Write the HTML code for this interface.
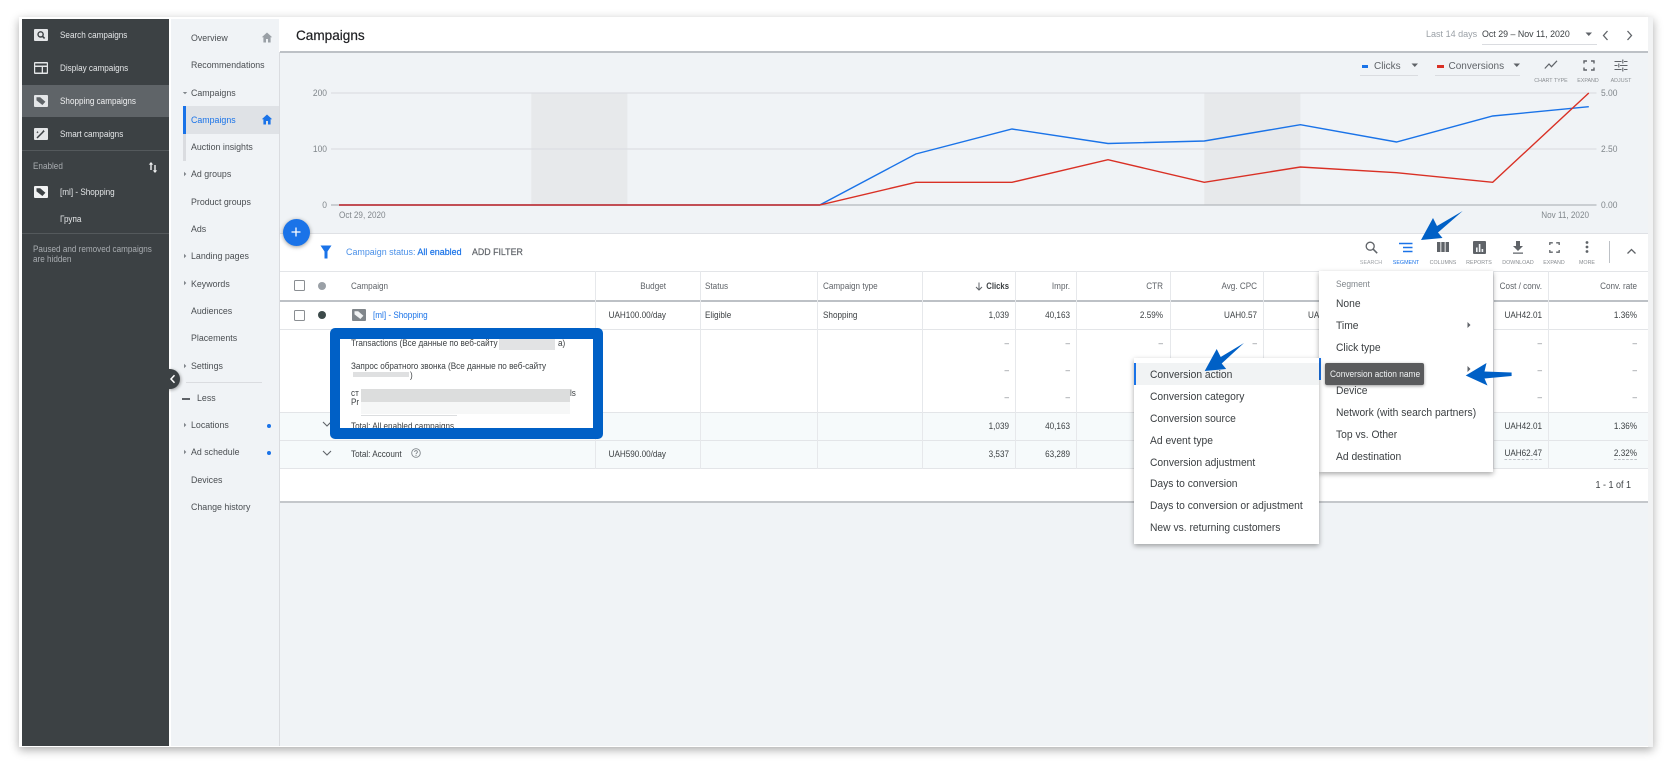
<!DOCTYPE html>
<html><head><meta charset="utf-8"><title>Campaigns</title>
<style>
html,body{margin:0;padding:0;background:#fff}
#p{position:relative;width:1680px;height:773px;overflow:hidden;background:#fff;font-family:"Liberation Sans","Noto Sans CJK SC",sans-serif;color:#3c4043;filter:blur(.3px)}
#p div,#p svg{position:absolute}
.t,.r,.c{position:absolute;white-space:nowrap;font-size:9.2px;line-height:12px}
.t{transform:translateY(-50%) scaleX(var(--s,.885));transform-origin:left center}
.r{transform:translate(-100%,-50%) scaleX(var(--s,.885));transform-origin:right center}
.c{transform:translate(-50%,-50%) scaleX(var(--s,.885));transform-origin:center center}
.w{color:#e4e6e8}
.g{color:#a9adb1}
.n{font-size:9.6px;--s:.92;left:191px;color:#4a4e52}
.m{font-size:11.2px;--s:.92;color:#3c4043}
.x{font-size:5.8px;--s:.92;color:#8a8e92}
.a{color:#5f6368}
.d{color:#80868b}
.v{background:#e6e8eb;width:1px;top:271px;height:198px}
</style></head><body><div id="p">

<!-- frame -->
<div style="left:19px;top:17px;width:1634px;height:730px;background:#fff;box-shadow:0 3px 9px rgba(0,0,0,.33)"></div>
<div style="left:1648px;top:17px;width:5px;height:730px;background:#f2f3f4"></div>

<!-- sidebar -->
<div style="left:22px;top:19px;width:147px;height:727px;background:#3c4144"></div>
<div style="left:22px;top:85px;width:147px;height:32px;background:#5f6468"></div>
<div style="left:22px;top:150px;width:147px;height:1px;background:#54595c"></div>
<div style="left:22px;top:233px;width:147px;height:1px;background:#54595c"></div>

<svg style="left:34px;top:29px" width="14" height="12" viewBox="0 0 14 12"><rect width="14" height="12" rx="1" fill="#e4e6e8"/><circle cx="6.6" cy="5.4" r="2.6" fill="none" stroke="#3c4144" stroke-width="1.4"/><path d="M8.5 7.3L10.6 9.4" stroke="#3c4144" stroke-width="1.6"/></svg>
<svg style="left:34px;top:62px" width="14" height="12" viewBox="0 0 14 12"><rect width="14" height="12" rx="1" fill="#e4e6e8"/><rect x="1.2" y="1.5" width="11.6" height="2" fill="#3c4144"/><rect x="1.2" y="5" width="6.5" height="5.5" fill="#3c4144"/><rect x="9" y="5" width="3.8" height="5.5" fill="#3c4144"/></svg>
<svg style="left:34px;top:95px" width="14" height="12" viewBox="0 0 14 12"><rect width="14" height="12" rx="1" fill="#e4e6e8"/><path d="M2.5 2.2h3.7l5.2 4.6-3 3.2-5.9-4.6z" fill="#5f6468"/></svg>
<svg style="left:34px;top:128px" width="14" height="12" viewBox="0 0 14 12"><rect width="14" height="12" rx="1" fill="#e4e6e8"/><path d="M3 10l6-6" stroke="#3c4144" stroke-width="1.5"/><path d="M9.5 1.8l.5 1 1 .5-1 .5-.5 1-.5-1-1-.5 1-.5zM3.5 3l.4.8.8.4-.8.4-.4.8-.4-.8-.8-.4.8-.4z" fill="#3c4144"/></svg>
<svg style="left:34px;top:186px" width="14" height="12" viewBox="0 0 14 12"><rect width="14" height="12" rx="1" fill="#f1f2f3"/><path d="M2.5 2.2h3.7l5.2 4.6-3 3.2-5.9-4.6z" fill="#3c4144"/></svg>
<svg style="left:148px;top:161px" width="10" height="13" viewBox="0 0 10 13"><path d="M3 1L.8 3.6h1.5V9h1.4V3.6h1.5zM7 12l2.2-2.6H7.7V4H6.3v5.4H4.800z" fill="#f0f1f2"/></svg>

<span class="t w" style="left:60px;top:35px">Search campaigns</span>
<span class="t w" style="left:60px;top:68px">Display campaigns</span>
<span class="t" style="left:60px;top:101px;color:#f0f1f2">Shopping campaigns</span>
<span class="t w" style="left:60px;top:134px">Smart campaigns</span>
<span class="t g" style="left:32.500px;top:166px">Enabled</span>
<span class="t w" style="left:60px;top:192px">[ml] - Shopping</span>
<span class="t w" style="left:60px;top:219px">Група</span>
<span class="t g" style="left:32.500px;top:249px">Paused and removed campaigns</span>
<span class="t g" style="left:32.500px;top:259px">are hidden</span>

<!-- nav -->
<div style="left:171px;top:19px;width:108px;height:727px;background:#f0f3f6"></div>
<div style="left:279px;top:52px;width:1px;height:694px;background:#dadce0"></div>
<div style="left:183px;top:106px;width:96px;height:28px;background:#dfe2e6"></div>
<div style="left:183px;top:106px;width:3px;height:28px;background:#1a73e8"></div>
<div style="left:183px;top:134px;width:3px;height:27px;background:#dadce0"></div>
<div style="left:186px;top:382px;width:76px;height:1px;background:#dadce0"></div>

<span class="t n" style="top:39px">Overview</span>
<span class="t n" style="top:66px">Recommendations</span>
<span class="t n" style="top:93.500px">Campaigns</span>
<span class="t n" style="top:121px;color:#1a73e8">Campaigns</span>
<span class="t n" style="top:148px">Auction insights</span>
<span class="t n" style="top:175px">Ad groups</span>
<span class="t n" style="top:203px">Product groups</span>
<span class="t n" style="top:230px">Ads</span>
<span class="t n" style="top:257px">Landing pages</span>
<span class="t n" style="top:285px">Keywords</span>
<span class="t n" style="top:312px">Audiences</span>
<span class="t n" style="top:339px">Placements</span>
<span class="t n" style="top:367px">Settings</span>
<span class="t n" style="top:399px;left:197px">Less</span>
<span class="t n" style="top:426px">Locations</span>
<span class="t n" style="top:453px">Ad schedule</span>
<span class="t n" style="top:481px">Devices</span>
<span class="t n" style="top:508px">Change history</span>

<svg style="left:261px;top:32px" width="12" height="11" viewBox="0 0 12 11"><path d="M6 .5L.8 5.300h1.600V10.500h2.600V7h2v3.500h2.600V5.300h1.600z" fill="#9aa0a6"/></svg>
<svg style="left:261px;top:114px" width="12" height="11" viewBox="0 0 12 11"><path d="M6 .5L.8 5.300h1.600V10.500h2.600V7h2v3.500h2.600V5.300h1.600z" fill="#1a73e8"/></svg>
<svg style="left:182px;top:90px" width="6" height="6" viewBox="0 0 6 6"><path d="M.8 2h4.400L3 4.300z" fill="#80868b"/></svg>
<svg style="left:182px;top:171px" width="6" height="6" viewBox="0 0 6 6"><path d="M2 .8v4.400L4.300 3z" fill="#80868b"/></svg>
<svg style="left:182px;top:253px" width="6" height="6" viewBox="0 0 6 6"><path d="M2 .8v4.400L4.300 3z" fill="#80868b"/></svg>
<svg style="left:182px;top:280px" width="6" height="6" viewBox="0 0 6 6"><path d="M2 .8v4.400L4.300 3z" fill="#80868b"/></svg>
<svg style="left:182px;top:363px" width="6" height="6" viewBox="0 0 6 6"><path d="M2 .8v4.400L4.300 3z" fill="#80868b"/></svg>
<svg style="left:182px;top:422px" width="6" height="6" viewBox="0 0 6 6"><path d="M2 .8v4.400L4.300 3z" fill="#80868b"/></svg>
<svg style="left:182px;top:449px" width="6" height="6" viewBox="0 0 6 6"><path d="M2 .8v4.400L4.300 3z" fill="#80868b"/></svg>
<div style="left:182px;top:398px;width:8px;height:1.500px;background:#5f6368"></div>
<div style="left:267px;top:424px;width:4px;height:4px;border-radius:50%;background:#1a73e8"></div>
<div style="left:267px;top:451px;width:4px;height:4px;border-radius:50%;background:#1a73e8"></div>

<!-- collapse -->
<div style="left:160px;top:369px;width:20px;height:20px;border-radius:50%;background:#3c4144;box-shadow:1px 1px 3px rgba(0,0,0,.35);clip-path:inset(-4px -4px -4px 9px)"></div>
<svg style="left:169px;top:374px" width="8" height="10" viewBox="0 0 8 10"><path d="M5.500 1.200L2 5l3.500 3.800" fill="none" stroke="#fff" stroke-width="1.500"/></svg>

<!-- main bg -->
<div style="left:280px;top:52px;width:1368px;height:694px;background:#f0f3f6"></div>
<!-- header -->
<div style="left:280px;top:17px;width:1368px;height:35px;background:#fff"></div>
<div style="left:280px;top:51px;width:1368px;height:1.500px;background:#bdc1c6"></div>
<span class="t" style="left:296px;top:35px;font-size:14px;--s:.97;color:#202124;-webkit-text-stroke:.2px #202124">Campaigns</span>
<span class="t g" style="left:1426px;top:35px;font-size:9.500px;--s:.95;color:#9aa0a6">Last 14 days</span>
<span class="t" style="left:1481.800px;top:35px;font-size:9.500px;--s:.93;color:#3c4043">Oct 29 – Nov 11, 2020</span>
<div style="left:1481.800px;top:44px;width:115px;height:1px;background:#dadce0"></div>
<svg style="left:1585px;top:32px" width="8" height="5" viewBox="0 0 8 5"><path d="M.5.500h6.500L3.800 4z" fill="#5f6368"/></svg>
<svg style="left:1601.500px;top:30px" width="7" height="11" viewBox="0 0 7 11"><path d="M5.500 1L1.500 5.500l4 4.500" fill="none" stroke="#5f6368" stroke-width="1.300"/></svg>
<svg style="left:1625.500px;top:30px" width="7" height="11" viewBox="0 0 7 11"><path d="M1.500 1l4 4.500-4 4.500" fill="none" stroke="#5f6368" stroke-width="1.300"/></svg>

<!-- chart toolbar -->
<div style="left:1361.800px;top:65px;width:6.500px;height:2.500px;background:#1a73e8"></div>
<span class="t" style="left:1374px;top:67px;font-size:10px;--s:1;color:#5f6368">Clicks</span>
<svg style="left:1411px;top:63px" width="8" height="5" viewBox="0 0 8 5"><path d="M.5.500h6.500L3.800 4z" fill="#5f6368"/></svg>
<div style="left:1360.400px;top:75px;width:58px;height:1px;background:#dadce0"></div>
<div style="left:1437px;top:65px;width:6.500px;height:2.500px;background:#d93025"></div>
<span class="t" style="left:1448.500px;top:67px;font-size:10px;--s:1;color:#5f6368">Conversions</span>
<svg style="left:1513px;top:63px" width="8" height="5" viewBox="0 0 8 5"><path d="M.5.500h6.500L3.800 4z" fill="#5f6368"/></svg>
<div style="left:1435px;top:75px;width:85px;height:1px;background:#dadce0"></div>

<svg style="left:1543.500px;top:60px" width="14" height="10" viewBox="0 0 14 10"><path d="M.8 8.500L5 4l2.500 2.700L13 .8" fill="none" stroke="#5f6368" stroke-width="1.200"/></svg>
<svg style="left:1582.500px;top:60px" width="12" height="11" viewBox="0 0 12 11"><path d="M1 3.500V1h3M8 1h3v2.500M11 7.500V10H8M4 10H1V7.500" fill="none" stroke="#5f6368" stroke-width="1.400"/></svg>
<svg style="left:1613.700px;top:59px" width="14" height="13" viewBox="0 0 14 13"><path d="M.5 2.500h7M10 2.500h3.500M.5 6.500h3M6 6.500h7.500M.5 10.500h7M10 10.500h3.500M8.800.5v4M4.800 4.500v4M8.800 8.500v4" fill="none" stroke="#5f6368" stroke-width="1.100"/></svg>
<span class="c x" style="left:1550.500px;top:80.500px">CHART TYPE</span>
<span class="c x" style="left:1588.400px;top:80.500px">EXPAND</span>
<span class="c x" style="left:1620.700px;top:80.500px">ADJUST</span>

<!-- chart -->
<svg style="left:0;top:0" width="1680" height="240" viewBox="0 0 1680 240">
<rect x="531.300" y="93" width="96.100" height="112" fill="#e7e9eb"/>
<rect x="1204.300" y="93" width="96.100" height="112" fill="#e7e9eb"/>
<path d="M331 93H1596.500M331 149H1596.500" stroke="#dcdfe3" stroke-width="1.200"/>
<path d="M331 205H1596.500" stroke="#b4b8bc" stroke-width="1.200"/>
<polyline fill="none" stroke="#1a73e8" stroke-width="1.400" points="339,205 819.700,205 915.800,154 1012,129 1108,143.500 1204.300,141 1300.400,124.700 1396.500,142 1492.700,116 1588.800,106.700"/>
<polyline fill="none" stroke="#d93025" stroke-width="1.400" points="339,205 819.700,205 915.800,182.300 1012,182.300 1108,159.700 1204.300,182.300 1300.400,167 1396.500,172.700 1492.700,182.300 1588.800,93"/>
</svg>
<span class="r a" style="left:327px;top:93px;--s:.92;color:#80868b">200</span>
<span class="r a" style="left:327px;top:149px;--s:.92;color:#80868b">100</span>
<span class="r a" style="left:327px;top:205px;--s:.92;color:#80868b">0</span>
<span class="t a" style="left:1601px;top:93px;--s:.92;color:#80868b">5.00</span>
<span class="t a" style="left:1601px;top:149px;--s:.92;color:#80868b">2.50</span>
<span class="t a" style="left:1601px;top:205px;--s:.92;color:#80868b">0.00</span>
<span class="t" style="left:339px;top:215px;color:#80868b">Oct 29, 2020</span>
<span class="r" style="left:1588.800px;top:215px;color:#80868b">Nov 11, 2020</span>

<!-- white table card -->
<div style="left:280px;top:233px;width:1368px;height:269px;background:#fff"></div>
<div style="left:280px;top:232.500px;width:1368px;height:1px;background:#dfe1e5"></div>
<div style="left:280px;top:501px;width:1368px;height:1.500px;background:#c4c7cb"></div>

<!-- filter row -->
<svg style="left:320px;top:245px" width="12" height="14" viewBox="0 0 12 14"><path d="M.5.500h11L7.500 6.500V13.500h-3V6.500z" fill="#1a73e8"/></svg>
<span class="t" style="left:345.700px;top:253px;font-size:9.600px;--s:.93;color:#4a90e8">Campaign status: <b style="color:#1a73e8;font-weight:normal;-webkit-text-stroke:.2px #1a73e8">All enabled</b></span>
<span class="t" style="left:472px;top:253px;font-size:9.600px;--s:.92;color:#5f6368;-webkit-text-stroke:.2px #5f6368">ADD FILTER</span>

<!-- toolbar icons -->
<svg style="left:1364.800px;top:241px" width="13" height="13" viewBox="0 0 13 13"><circle cx="5.200" cy="5.200" r="4" fill="none" stroke="#5f6368" stroke-width="1.300"/><path d="M8.200 8.200l4 4" stroke="#5f6368" stroke-width="1.500"/></svg>
<svg style="left:1399px;top:242px" width="14" height="11" viewBox="0 0 14 11"><path d="M0 1.500h13.500M4 5.500h9.500M4 9.500h9.500" stroke="#1a73e8" stroke-width="1.500"/></svg>
<svg style="left:1437px;top:242px" width="12" height="10" viewBox="0 0 12 10"><path d="M0 0h3.400v10H0zM4.300 0h3.400v10H4.300zM8.600 0H12v10H8.600z" fill="#5f6368"/></svg>
<svg style="left:1472.500px;top:241px" width="13" height="13" viewBox="0 0 13 13"><rect width="13" height="13" rx="1" fill="#5f6368"/><path d="M3 6.500h1.600V11H3zM5.800 3h1.600v8H5.800zM8.600 8h1.600v3H8.600z" fill="#f0f3f6"/></svg>
<svg style="left:1512.600px;top:241px" width="10" height="13" viewBox="0 0 10 13"><path d="M3 0h4v5h3L5 10 0 5h3zM0 11.500h10v1.300H0z" fill="#5f6368"/></svg>
<svg style="left:1548.500px;top:242px" width="11" height="11" viewBox="0 0 11 11"><path d="M.8 3V.8h3M7.200.8h3V3M10.200 8v2.200h-3M3.800 10.200h-3V8" fill="none" stroke="#5f6368" stroke-width="1.300"/></svg>
<svg style="left:1584.700px;top:241px" width="4" height="12" viewBox="0 0 4 12"><circle cx="2" cy="1.500" r="1.400" fill="#5f6368"/><circle cx="2" cy="6" r="1.400" fill="#5f6368"/><circle cx="2" cy="10.500" r="1.400" fill="#5f6368"/></svg>
<span class="c x" style="left:1371.300px;top:262.500px;color:#a0a4a8">SEARCH</span>
<span class="c x" style="left:1405.700px;top:262.500px;color:#1a73e8">SEGMENT</span>
<span class="c x" style="left:1442.900px;top:262.500px">COLUMNS</span>
<span class="c x" style="left:1479px;top:262.500px">REPORTS</span>
<span class="c x" style="left:1517.600px;top:262.500px">DOWNLOAD</span>
<span class="c x" style="left:1554px;top:262.500px">EXPAND</span>
<span class="c x" style="left:1586.700px;top:262.500px">MORE</span>
<div style="left:1609px;top:241px;width:1px;height:22px;background:#bdc1c6"></div>
<svg style="left:1626px;top:248px" width="11" height="7" viewBox="0 0 11 7"><path d="M1.500 5.500l4-4 4 4" fill="none" stroke="#5f6368" stroke-width="1.300"/></svg>

<!-- table -->
<div style="left:280px;top:412px;width:1368px;height:57px;background:#f6fafb"></div>
<div style="left:280px;top:271px;width:1368px;height:1px;background:#e3e5e8"></div>
<div style="left:280px;top:300px;width:1368px;height:2px;background:#bdc1c6"></div>
<div style="left:280px;top:329px;width:1368px;height:1px;background:#e3e5e8"></div>
<div style="left:280px;top:411.500px;width:1368px;height:1px;background:#e3e5e8"></div>
<div style="left:280px;top:440px;width:1368px;height:1px;background:#e3e5e8"></div>
<div style="left:280px;top:468px;width:1368px;height:1px;background:#e3e5e8"></div>
<div class="v" style="left:595px"></div>
<div class="v" style="left:700px"></div>
<div class="v" style="left:816.500px"></div>
<div class="v" style="left:921.500px"></div>
<div class="v" style="left:1015px"></div>
<div class="v" style="left:1075.500px"></div>
<div class="v" style="left:1170px"></div>
<div class="v" style="left:1262.600px"></div>
<div class="v" style="left:1493.400px"></div>
<div class="v" style="left:1548.400px"></div>

<div style="left:293.500px;top:279.500px;width:9.500px;height:9.500px;border:1.200px solid #8a8e92;border-radius:1.500px"></div>
<div style="left:293.500px;top:309.500px;width:9.500px;height:9.500px;border:1.200px solid #8a8e92;border-radius:1.500px"></div>
<div style="left:318px;top:282px;width:8px;height:8px;border-radius:50%;background:#9aa0a6"></div>
<div style="left:318px;top:311px;width:8px;height:8px;border-radius:50%;background:#3c4a4a"></div>
<svg style="left:352px;top:309px" width="14" height="12" viewBox="0 0 14 12"><rect width="14" height="12" rx="1" fill="#80868b"/><path d="M2.500 2.200h3.700l5.200 4.600-3 3.200-5.900-4.600z" fill="#f1f3f4"/></svg>

<span class="t a" style="left:351px;top:285.500px">Campaign</span>
<span class="r a" style="left:666px;top:285.500px">Budget</span>
<span class="t a" style="left:705px;top:285.500px">Status</span>
<span class="t a" style="left:823px;top:285.500px">Campaign type</span>
<svg style="left:975px;top:282px" width="8" height="9" viewBox="0 0 8 9"><path d="M4 .5V8M1 5l3 3 3-3" fill="none" stroke="#5f6368" stroke-width="1"/></svg>
<span class="r" style="left:1009px;top:285.500px;color:#3c4043;font-weight:bold;--s:.84">Clicks</span>
<span class="r a" style="left:1070px;top:285.500px">Impr.</span>
<span class="r a" style="left:1163.300px;top:285.500px">CTR</span>
<span class="r a" style="left:1257px;top:285.500px">Avg. CPC</span>
<span class="r a" style="left:1542px;top:285.500px">Cost / conv.</span>
<span class="r a" style="left:1636.800px;top:285.500px">Conv. rate</span>

<span class="t" style="left:372.500px;top:315px;color:#1a73e8">[ml] - Shopping</span>
<span class="r" style="left:666px;top:315px">UAH100.00/day</span>
<span class="t" style="left:705px;top:315px">Eligible</span>
<span class="t" style="left:823px;top:315px">Shopping</span>
<span class="r" style="left:1009px;top:315px">1,039</span>
<span class="r" style="left:1070px;top:315px">40,163</span>
<span class="r" style="left:1163.300px;top:315px">2.59%</span>
<span class="r" style="left:1257px;top:315px">UAH0.57</span>
<span class="t" style="left:1307.800px;top:315px">UA</span>
<span class="r" style="left:1542px;top:315px">UAH42.01</span>
<span class="r" style="left:1636.800px;top:315px">1.36%</span>

<span class="r d" style="left:1009px;top:343px">–</span><span class="r d" style="left:1070px;top:343px">–</span><span class="r d" style="left:1163.300px;top:343px">–</span><span class="r d" style="left:1257px;top:343px">–</span><span class="r d" style="left:1542px;top:343px">–</span><span class="r d" style="left:1636.800px;top:343px">–</span>
<span class="r d" style="left:1009px;top:370px">–</span><span class="r d" style="left:1070px;top:370px">–</span><span class="r d" style="left:1542px;top:370px">–</span><span class="r d" style="left:1636.800px;top:370px">–</span>
<span class="r d" style="left:1009px;top:397px">–</span><span class="r d" style="left:1070px;top:397px">–</span><span class="r d" style="left:1542px;top:397px">–</span><span class="r d" style="left:1636.800px;top:397px">–</span>

<span class="r" style="left:1009px;top:426px">1,039</span>
<span class="r" style="left:1070px;top:426px">40,163</span>
<span class="r" style="left:1542px;top:426px">UAH42.01</span>
<span class="r" style="left:1636.800px;top:426px">1.36%</span>
<span class="t" style="left:351px;top:454px">Total: Account</span>
<span class="r" style="left:666px;top:454px">UAH590.00/day</span>
<span class="r" style="left:1009px;top:454px">3,537</span>
<span class="r" style="left:1070px;top:454px">63,289</span>
<span class="r" style="left:1542px;top:454px;border-bottom:1px dashed #bdc1c6;line-height:11px">UAH62.47</span>
<span class="r" style="left:1636.800px;top:454px;border-bottom:1px dashed #bdc1c6;line-height:11px">2.32%</span>
<svg style="left:322px;top:421px" width="10" height="7" viewBox="0 0 10 7"><path d="M1 1l4 4 4-4" fill="none" stroke="#5f6368" stroke-width="1.100"/></svg>
<svg style="left:322px;top:450px" width="10" height="7" viewBox="0 0 10 7"><path d="M1 1l4 4 4-4" fill="none" stroke="#5f6368" stroke-width="1.100"/></svg>
<svg style="left:411px;top:448px" width="10" height="10" viewBox="0 0 10 10"><circle cx="5" cy="5" r="4.300" fill="none" stroke="#80868b" stroke-width=".9"/><path d="M3.600 4c0-1.900 2.800-1.900 2.800 0 0 1-1.400 1-1.400 2.200M5 7v1" fill="none" stroke="#80868b" stroke-width=".9"/></svg>

<span class="r" style="left:1630.500px;top:486px;font-size:10px;--s:.9">1 - 1 of 1</span>

<!-- FAB -->
<div style="left:282.500px;top:218.500px;width:27px;height:27px;border-radius:50%;background:#1a73e8;box-shadow:0 1px 4px rgba(0,0,0,.4)"></div>
<svg style="left:291px;top:227px" width="10" height="10" viewBox="0 0 10 10"><path d="M5 .5v9M.5 5h9" stroke="#fff" stroke-width="1.300"/></svg>

<!-- blue annotation box -->
<div style="left:330px;top:328px;width:253px;height:89px;border:10px solid #0060c6;border-top-width:11px;border-bottom-width:11px;border-radius:5px;background:#fff;overflow:hidden">
  <div style="left:0;top:0;width:253px;height:89px;overflow:hidden;background:#fff">
    <span class="t" style="left:11px;top:4px;color:#3c4043">Transactions (Все данные по веб-сайту</span>
    <div style="left:159px;top:0;width:56px;height:11px;background:#e2e3e4"></div>
    <span class="t" style="left:218px;top:4px;color:#3c4043">a)</span>
    <span class="t" style="left:11px;top:27px;color:#3c4043">Запрос обратного звонка (Все данные по веб-сайту</span>
    <div style="left:13px;top:33px;width:56px;height:5px;background:#dfe0e1"></div>
    <span class="t" style="left:70px;top:36px;color:#3c4043">)</span>
    <span class="t" style="left:11px;top:54px;color:#3c4043">ст</span>
    <span class="t" style="left:11px;top:63px;color:#3c4043">Pr</span>
    <div style="left:21px;top:50px;width:209px;height:13px;background:#dcdddd"></div>
    <div style="left:21px;top:63px;width:209px;height:12px;background:#f6f7f7"></div>
    <div style="left:21px;top:76px;width:96px;height:1px;background:#dcdee0"></div>
    <span class="t" style="left:230px;top:54px;color:#3c4043">ls</span>
    <span class="t" style="left:11px;top:87px;color:#3c4043">Total: All enabled campaigns</span>
  </div>
</div>

<!-- Segment menu -->
<div style="left:1319.400px;top:271px;width:173.600px;height:201px;background:#fff;box-shadow:0 2px 5px rgba(0,0,0,.35)"></div>
<span class="t" style="left:1335.500px;top:284px;font-size:9.200px;--s:.92;color:#80868b">Segment</span>
<span class="t m" style="left:1335.500px;top:304px">None</span>
<span class="t m" style="left:1335.500px;top:326px">Time</span>
<span class="t m" style="left:1335.500px;top:347.500px">Click type</span>
<span class="t m" style="left:1335.500px;top:391px">Device</span>
<span class="t m" style="left:1335.500px;top:413px">Network (with search partners)</span>
<span class="t m" style="left:1335.500px;top:435px">Top vs. Other</span>
<span class="t m" style="left:1335.500px;top:457px">Ad destination</span>
<svg style="left:1467px;top:322px" width="4" height="6" viewBox="0 0 4 6"><path d="M.5 0L3.500 3 .5 6z" fill="#5f6368"/></svg>
<svg style="left:1467px;top:366px" width="4" height="6" viewBox="0 0 4 6"><path d="M.5 0L3.500 3 .5 6z" fill="#5f6368"/></svg>

<!-- Sub menu -->
<div style="left:1319.400px;top:358px;width:2px;height:22px;background:#1a73e8"></div>
<div style="left:1134px;top:358px;width:185.400px;height:186px;background:#fff;box-shadow:0 2px 5px rgba(0,0,0,.35)"></div>
<div style="left:1134px;top:363px;width:185.400px;height:22px;background:#f1f3f4"></div>
<div style="left:1134px;top:363px;width:2px;height:22px;background:#1a73e8"></div>
<span class="t m" style="left:1150.300px;top:375px">Conversion action</span>
<span class="t m" style="left:1150.300px;top:397px">Conversion category</span>
<span class="t m" style="left:1150.300px;top:419px">Conversion source</span>
<span class="t m" style="left:1150.300px;top:441px">Ad event type</span>
<span class="t m" style="left:1150.300px;top:462.700px">Conversion adjustment</span>
<span class="t m" style="left:1150.300px;top:484px">Days to conversion</span>
<span class="t m" style="left:1150.300px;top:506px">Days to conversion or adjustment</span>
<span class="t m" style="left:1150.300px;top:528px">New vs. returning customers</span>

<!-- Tooltip -->
<div style="left:1324.700px;top:363px;width:99.300px;height:22px;background:#5a5b5d;border-radius:2px;box-shadow:0 1px 3px rgba(0,0,0,.4)"></div>
<span class="t" style="left:1330px;top:374px;color:#f1f3f4;--s:.91">Conversion action name</span>

<!-- arrows -->
<svg style="left:0;top:0" width="1680" height="773" viewBox="0 0 1680 773">
<path d="M1421 240L1433 218 1437 226 1462.700 211 1438 232.500 1442.500 238Z" fill="#0060c6"/>
<path d="M1204.700 371L1216.700 349 1220.700 357 1244 343 1221.700 363.500 1226.200 369Z" fill="#0060c6"/>
<path d="M1465.700 375.500L1486.500 363 1484.500 371.500 1511.600 372.500 1511.600 376 1484.500 378.500 1487.500 385.500Z" fill="#0060c6"/>
</svg>

</div></body></html>
